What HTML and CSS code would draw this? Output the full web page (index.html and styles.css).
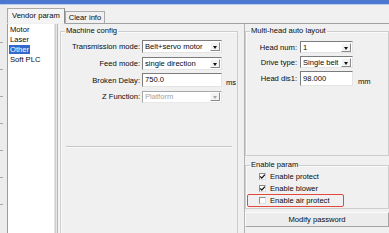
FILE: index.html
```html
<!DOCTYPE html>
<html lang="en">
  <head>
    <meta charset="UTF-8" />
    <title>Vendor param</title>
    <link rel="stylesheet" href="styles.css">
  </head>
  <body>
    <div class="titlebar"></div>
    <div class="window">
      <!-- ruler strip on the far left -->
      <div class="gutter">
        <span class="tick"></span>
        <span class="tick"></span>
        <span class="tick"></span>
        <span class="tick"></span>
        <span class="tick"></span>
        <span class="tick"></span>
        <span class="tick"></span>
      </div>

      <div class="content">
        <div class="tabbar">
          <div class="tab active">Vendor param</div>
          <div class="tab">Clear info</div>
          <div class="tabfill"></div>
        </div>

        <div class="page">
          <ul class="navlist">
            <li>Motor</li>
            <li>Laser</li>
            <li class="selected"><span>Other</span></li>
            <li>Soft PLC</li>
          </ul>
          <div class="splitter"></div>

          <!-- Machine config -->
          <fieldset class="group machine">
            <legend>Machine config</legend>
            <div class="form-grid machine-grid">
              <label>Transmission mode:</label>
              <div class="combo"><span>Belt+servo motor</span><i class="drop"></i></div>
              <span></span>

              <label>Feed mode:</label>
              <div class="combo"><span>single direction</span><i class="drop"></i></div>
              <span></span>

              <label>Broken Delay:</label>
              <div class="textbox">750.0</div>
              <span class="unit">ms</span>

              <label>Z Function:</label>
              <div class="combo disabled"><span>Platform</span><i class="drop"></i></div>
              <span></span>
            </div>
            <div class="separator"></div>
          </fieldset>

          <div class="divider"></div>

          <div class="rightcol">
            <fieldset class="group multihead">
              <legend>Multi-head auto layout</legend>
              <div class="form-grid head-grid">
                <label>Head num:</label>
                <div class="combo"><span>1</span><i class="drop"></i></div>
                <span></span>

                <label>Drive type:</label>
                <div class="combo"><span>Single belt</span><i class="drop"></i></div>
                <span></span>

                <label>Head dis1:</label>
                <div class="textbox tall">98.000</div>
                <span class="unit">mm</span>
              </div>
            </fieldset>

            <fieldset class="group enable">
              <legend>Enable param</legend>
              <div class="checks">
                <div class="check">
                  <span class="box"><svg viewBox="0 0 7 7" width="7" height="7"><path d="M1.2 3.4 L2.8 5.1 L5.9 1.6" fill="none" stroke="#111" stroke-width="1.3"/></svg></span>
                  Enable protect
                </div>
                <div class="check">
                  <span class="box"><svg viewBox="0 0 7 7" width="7" height="7"><path d="M1.2 3.4 L2.8 5.1 L5.9 1.6" fill="none" stroke="#111" stroke-width="1.3"/></svg></span>
                  Enable blower
                </div>
                <div class="check marked">
                  <span class="box"></span>
                  Enable air protect
                </div>
              </div>
            </fieldset>

            <button class="modify">Modify password</button>
          </div>
        </div>
      </div>
    </div>
  </body>
</html>
```

FILE: styles.css
```css
* {
  margin: 0;
  padding: 0;
  box-sizing: border-box;
}

body {
  width: 389px;
  height: 233px;
  overflow: hidden;
  background: #f0f0f0;
  font-family: "Liberation Sans", Arial, sans-serif;
  font-size: 7.6px;
  color: #0a0a0a;
}

.titlebar {
  height: 5px;
  background: #4d78cf;
  border-bottom: 1px solid #b9cdee;
}

.window {
  display: flex;
  height: 228px;
  overflow: hidden;
}

.gutter {
  width: 8px;
  background: #ececec;
  display: flex;
  flex-direction: column;
  gap: 26px;
  padding-top: 37px;
}

.tick {
  display: block;
  width: 3px;
  height: 1px;
  background: #a8a8a8;
}

.content {
  flex: 1;
  display: flex;
  flex-direction: column;
  min-height: 0;
}

/* tabs */
.tabbar {
  display: flex;
  align-items: flex-end;
  height: 19px;
  padding-top: 3px;
}

.tab {
  height: 13px;
  padding: 0 3px;
  line-height: 12px;
  border: 1px solid #a9a9a9;
  border-bottom: 1px solid #a0a0a0;
  background: #f0f0f0;
  white-space: nowrap;
}

.tab.active {
  height: 16px;
  padding: 0 4px;
  line-height: 14px;
  border-bottom-color: #f0f0f0;
  background: #f4f4f4;
  border-right-color: #8e8e8e;
}

.tabfill {
  flex: 1;
  border-bottom: 1px solid #a0a0a0;
}

.page {
  flex: 1;
  display: flex;
  min-height: 0;
  overflow: hidden;
}

/* left list */
.navlist {
  list-style: none;
  width: 48px;
  background: #fff;
  border-left: 1px solid #9c9c9c;
  border-right: 1px solid #e2e2e2;
  padding: 1px 0 0 1px;
}

.navlist li {
  height: 10px;
  line-height: 10px;
  padding-left: 1px;
}

.navlist li.selected span {
  display: inline-block;
  background: #3468cc;
  color: #fff;
  padding: 0 1px;
  margin-left: -1px;
  line-height: 9px;
  height: 9px;
}

.splitter {
  width: 5px;
  border-left: 1px solid #cfcfcf;
  border-right: 1px solid #f8f8f8;
  background: linear-gradient(to right, #e6e6e6 0 1px, #b9b9b9 1px 2px, #f0f0f0 2px);
}

/* group boxes */
.group {
  border: 1px solid #cdcdcd;
  box-shadow: inset 1px 1px 0 #fbfbfb;
  margin-top: 2px;
}

.group legend {
  margin-left: 4px;
  padding: 0 1px;
  line-height: 10px;
}

.machine {
  width: 178px;
  height: 215px;
  flex-shrink: 0;
}

.form-grid {
  display: grid;
  align-items: center;
}

.form-grid label {
  text-align: right;
  white-space: nowrap;
}

.machine-grid {
  grid-template-columns: 79px 80px auto;
  column-gap: 2px;
  row-gap: 3.5px;
  padding-top: 4px;
}

.head-grid {
  grid-template-columns: 51px 53px auto;
  column-gap: 3px;
  row-gap: 3px;
  padding-top: 5px;
}

.combo {
  display: flex;
  align-items: center;
  height: 13px;
  background: #fff;
  border: 1px solid;
  border-color: #7c7c7c #e4e4e4 #e4e4e4 #7c7c7c;
  padding-left: 2px;
  white-space: nowrap;
  overflow: hidden;
}

.head-grid .combo {
  height: 12px;
}

.combo span {
  flex: 1;
  overflow: hidden;
}

.combo .drop {
  width: 10px;
  height: 9px;
  margin-right: 1px;
  background: #f3f3f3;
  border: 1px solid;
  border-color: #fdfdfd #8a8a8a #8a8a8a #fdfdfd;
  position: relative;
  flex-shrink: 0;
}

.combo .drop::after {
  content: "";
  position: absolute;
  left: 2px;
  top: 3px;
  border-left: 2.5px solid transparent;
  border-right: 2.5px solid transparent;
  border-top: 3px solid #111;
}

.combo.disabled {
  color: #a2a2a2;
  height: 12px;
  border-color: #a8a8a8 #e8e8e8 #e8e8e8 #a8a8a8;
}

.combo.disabled .drop::after {
  border-top-color: #a6a6a6;
}

.textbox {
  height: 14px;
  line-height: 12px;
  background: #fff;
  border: 1px solid;
  border-color: #7c7c7c #e4e4e4 #e4e4e4 #7c7c7c;
  padding-left: 2px;
}

.textbox.tall {
  height: 15px;
  line-height: 13px;
}

.unit {
  padding-left: 2px;
  align-self: end;
}

.separator {
  margin: 43px 5px 0 5px;
  border-top: 1px solid #c6c6c6;
  border-bottom: 1px solid #fafafa;
}

.divider {
  width: 7px;
  border-right: 1px solid #b4b4b4;
  flex-shrink: 0;
}

.rightcol {
  width: 144px;
  flex-shrink: 0;
  display: flex;
  flex-direction: column;
}

.multihead {
  height: 130px;
}

.enable {
  margin-top: 4px;
  height: 49px;
}

.checks {
  padding: 1px 0 0 13px;
}

.check {
  display: flex;
  align-items: center;
  gap: 4px;
  height: 11.5px;
}

.check .box {
  width: 7px;
  height: 7px;
  background: #fff;
  border: 1px solid;
  border-color: #8d8d8d #dedede #dedede #8d8d8d;
  display: flex;
}

.check .box svg {
  margin: -1px;
}

.check.marked {
  width: 97px;
  height: 13px;
  margin-left: -12px;
  padding-left: 11px;
  border: 1.5px solid #e0493b;
  border-radius: 2px;
}

.modify {
  margin-top: 3px;
  height: 15px;
  font: inherit;
  color: #0a0a0a;
  background: #ececec;
  border: 1px solid;
  border-color: #fcfcfc #a4a4a4 #a4a4a4 #fcfcfc;
}
```
